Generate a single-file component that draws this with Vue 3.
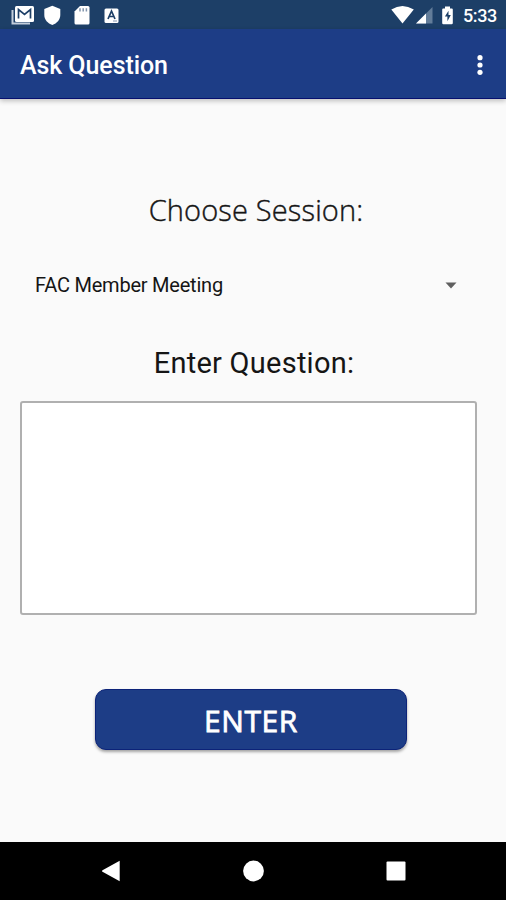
<script setup>
import { ref } from 'vue'

const session = ref('FAC Member Meeting')
const question = ref('')
</script>

<template>
  <div class="screen">
    <div class="status">
      <svg class="status-left" viewBox="0 0 130 29" width="130" height="29">
        <path d="M12.500 10v13.500h17.500" fill="none" stroke="#c3cedb" stroke-width="2" />
        <rect x="15" y="6" width="19" height="16" rx="1.500" fill="#fff" />
        <path d="M18.500 18.500V9.500l6 5 6-5v9" fill="none" stroke="#1d3f67" stroke-width="1.700" />
        <path d="M52.300 5.800l8 3.200v6c0 4.700-3.400 8.400-8 10-4.600-1.600-8-5.300-8-10V9z" fill="#fff" />
        <path d="M80 6h8q1.500 0 1.500 1.500v15.500q0 1.500-1.500 1.500H76q-1.500 0-1.500-1.500V11.500z" fill="#fff" />
        <path d="M80 8.200v3.300M83.200 8.200v3.300M86.400 8.200v3.300" stroke="#8295ad" stroke-width="1.500" />
        <rect x="104.500" y="8.500" width="14" height="14.500" rx="1.500" fill="#fff" />
        <path d="M108 19l3.500-8 3.500 8M109.200 16.500h4.600" fill="none" stroke="#1d3f67" stroke-width="1.700" />
        <path d="M113 21h4" stroke="#8295ad" />
      </svg>
      <div class="status-right">
        <svg viewBox="0 0 70 29" width="70" height="29">
          <path d="M.3 9.500Q11.500 2.500 22.800 9.500L11.500 23.500z" fill="#fff" />
          <path d="M41.500 7v16.500H25z" fill="#627c99" />
          <path d="M35 13.500v10H25z" fill="#fff" />
          <path d="M54 6.500h5v2h1.800q1 0 1 1V23q0 1.200-1.200 1.200h-8.200q-1.200 0-1.200-1.200V9.500q0-1 1-1H54z" fill="#fff" />
          <path d="M57.500 10.800l-3.600 5.700h2.500v4.700l3.400-6.200h-2.300z" fill="#1d3f67" />
        </svg>
        <span class="clock">5:33</span>
      </div>
    </div>

    <header class="bar">
      <h1>Ask Question</h1>
      <svg class="more" viewBox="0 0 8 24" width="8" height="24">
        <circle cx="4" cy="4.700" r="2.600" /><circle cx="4" cy="12" r="2.600" /><circle cx="4" cy="19.300" r="2.600" />
      </svg>
    </header>

    <main>
      <h2 class="choose">Choose Session:</h2>
      <div class="select">
        <span>{{ session }}</span>
        <svg viewBox="0 0 12 7" width="12" height="7"><path d="M.5.5h11L6 6.500z" fill="#5f5f5f" /></svg>
      </div>
      <h2 class="enter-label">Enter Question:</h2>
      <textarea v-model="question"></textarea>
      <button type="button">ENTER</button>
    </main>

    <nav>
      <svg viewBox="0 0 18 22" width="18" height="22"><path d="M17.700.8v20.400L.5 11.800q-1-.8 0-1.600z" /></svg>
      <svg viewBox="0 0 22 22" width="22" height="22"><circle cx="11.500" cy="11" r="10.400" /></svg>
      <svg viewBox="0 0 20 20" width="20" height="20"><rect x=".5" y=".5" width="19" height="19" rx="1" /></svg>
    </nav>
  </div>
</template>

<style>
body { margin: 0; }
</style>

<style scoped>
.screen {
  width: 506px;
  height: 900px;
  display: flex;
  flex-direction: column;
  background: #fafafa;
  font-family: Roboto, sans-serif;
  color: #151515;
  overflow: hidden;
}
.status {
  height: 29px;
  display: flex;
  justify-content: space-between;
  background: #1d3f67;
}
.status svg { display: block; }
.status-right { display: flex; width: 115px; }
.clock {
  width: 45px;
  padding-left: 2px;
  box-sizing: border-box;
  font-size: 18px;
  font-weight: 500;
  line-height: 32px;
  letter-spacing: -0.4px;
  color: #fff;
}
.bar {
  height: 70px;
  box-sizing: border-box;
  padding: 0 22px 0 20px;
  display: flex;
  align-items: center;
  justify-content: space-between;
  background: #1d3d86;
  border-bottom: 1px solid #07106f;
  box-shadow: 0 2px 5px rgba(0, 0, 0, 0.24);
}
h1 {
  margin: 5px 0 0;
  font-size: 25px;
  line-height: 32px;
  font-weight: 500;
  letter-spacing: -0.08px;
  color: #fff;
}
.more { fill: #fff; margin-top: 2px; }
main { flex: 1; display: flex; flex-direction: column; }
h2 { margin: 0; font-weight: 400; white-space: nowrap; text-align: center; }
.choose {
  padding: 91px 0 0 6px;
  font-family: "Open Sans", sans-serif;
  font-weight: 300;
  font-size: 29px;
  line-height: 40px;
  letter-spacing: 0.15px;
  -webkit-text-stroke: 0.4px #151515;
}
.select {
  margin: 35px 49px 0 35px;
  height: 40px;
  display: flex;
  align-items: center;
  justify-content: space-between;
  font-size: 20px;
  letter-spacing: -0.22px;
}
.enter-label {
  padding: 38px 0 0 2px;
  font-size: 29px;
  line-height: 40px;
  letter-spacing: 0.25px;
}
textarea {
  display: block;
  width: 457px;
  height: 214px;
  margin: 18px 0 0 20px;
  box-sizing: border-box;
  border: 2px solid #b0b0b0;
  border-radius: 3px;
  background: #fff;
  resize: none;
  outline: none;
}
button {
  width: 312px;
  height: 61px;
  margin: 74px 0 0 95px;
  padding: 2px 0 0;
  border: 1px solid #0c2379;
  border-radius: 11px;
  background: #1d3d86;
  box-shadow: 0 2px 3px rgba(0, 0, 0, 0.35);
  color: #fff;
  font-family: "Open Sans", sans-serif;
  font-size: 30px;
  font-weight: 400;
  line-height: 57px;
  letter-spacing: 0.6px;
  -webkit-text-stroke: 0.8px #fff;
}
nav {
  height: 58px;
  box-sizing: border-box;
  padding: 0 100px 0 102px;
  display: flex;
  align-items: center;
  justify-content: space-between;
  background: #000;
  fill: #fff;
}
</style>
